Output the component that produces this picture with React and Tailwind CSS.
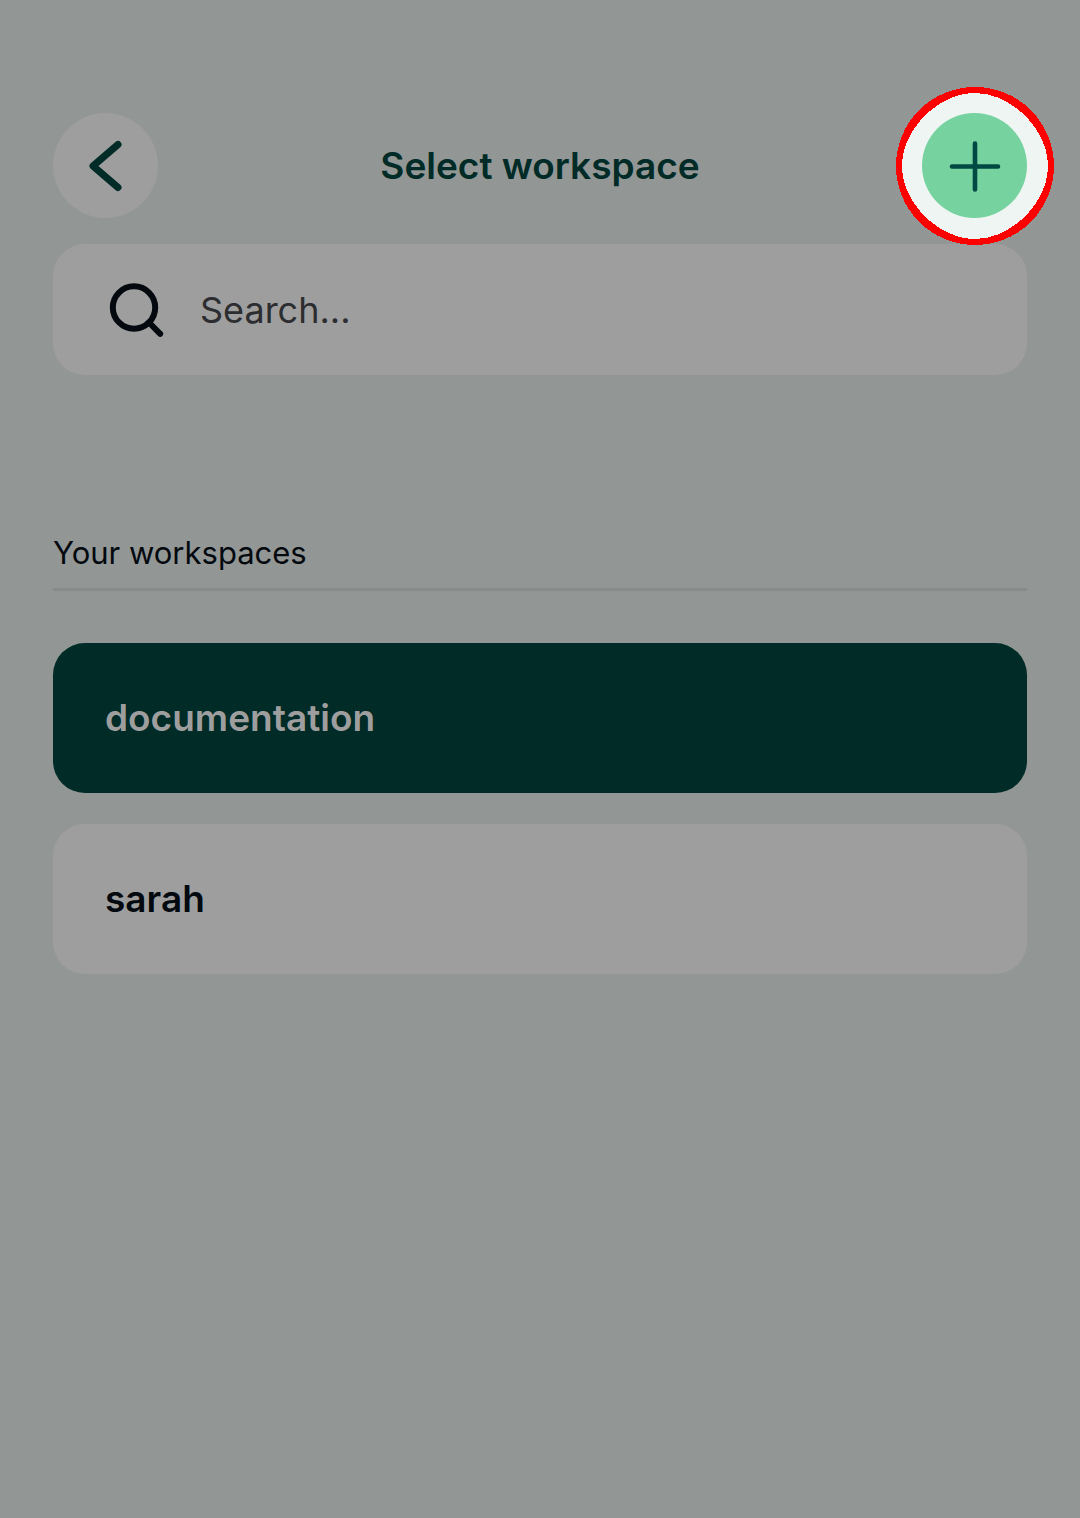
/*
============================================================================
FILE: src/App.jsx
============================================================================
PURPOSE:
  Workspace picker screen. Lists the user's workspaces, with a search box and
  a highlighted button for adding a new one.
============================================================================
*/

import React, { useState } from 'react';

const WORKSPACES = ['documentation', 'sarah'];

const BackIcon = () => (
  <svg viewBox="0 0 105 105" className="size-full" fill="none" aria-hidden="true">
    <path
      d="M65 31.5 L40 53 L65 74.5"
      stroke="currentColor"
      strokeWidth="7"
      strokeLinecap="round"
      strokeLinejoin="round"
    />
  </svg>
);

const PlusIcon = () => (
  <svg viewBox="0 0 105 105" className="size-full" fill="none" aria-hidden="true">
    <path
      d="M53 30.5 V76.5 M30 53.5 H76"
      stroke="currentColor"
      strokeWidth="4.6"
      strokeLinecap="round"
    />
  </svg>
);

const SearchIcon = () => (
  <svg viewBox="0 0 56 56" className="size-14 shrink-0" fill="none" aria-hidden="true">
    <circle cx="26" cy="25.5" r="21.2" stroke="currentColor" strokeWidth="6" />
    <path d="M41 40.5 L52.2 51.8" stroke="currentColor" strokeWidth="6" strokeLinecap="round" />
  </svg>
);

// Hard-edged marker ring, a little thicker on the diagonals
const HighlightRing = () => (
  <svg
    viewBox="0 0 158 158"
    className="absolute -top-[26px] -left-[26px] size-[158px] max-w-none"
    shapeRendering="crispEdges"
    aria-hidden="true"
  >
    <circle cx="79" cy="79" r="79" fill="#ff0000" />
    <path
      d="M79 6 C115.5 6 152 42.5 152 79 C152 115.5 115.5 152 79 152 C42.5 152 6 115.5 6 79 C6 42.5 42.5 6 79 6 Z"
      fill="#eff5f3"
    />
  </svg>
);

const App = () => {
  const [query, setQuery] = useState('');
  const [selected, setSelected] = useState('documentation');

  const visible = WORKSPACES.filter((name) => name.includes(query.toLowerCase()));

  return (
    <div className="min-h-screen bg-[#929694] px-[53px] pt-[113px] pb-16 font-['Inter',sans-serif] text-[#03090e]">
      {/* Header */}
      <header className="flex items-center justify-between">
        <button
          type="button"
          aria-label="Back"
          className="size-[105px] rounded-full bg-[#9e9e9e] text-[#002b27]"
        >
          <BackIcon />
        </button>
        <h1 className="text-[37px] leading-[48px] font-semibold text-[#002b27]">
          Select workspace
        </h1>
        <div className="relative z-10 size-[105px]">
          <HighlightRing />
          <button
            type="button"
            aria-label="Add workspace"
            className="relative size-full rounded-full bg-[#76d29f] text-[#004a43]"
          >
            <PlusIcon />
          </button>
        </div>
      </header>

      {/* Search */}
      <label className="mt-[26px] flex h-[131px] items-center gap-9 rounded-[32px] bg-[#9e9e9e] px-[55px]">
        <SearchIcon />
        <input
          type="text"
          aria-label="Search workspaces"
          placeholder="Search..."
          value={query}
          onChange={(e) => setQuery(e.target.value)}
          className="min-w-0 flex-1 bg-transparent text-[36px] leading-[48px] outline-none placeholder:text-[#2c2d30]"
        />
      </label>

      {/* Workspace list */}
      <h2 className="mt-[158px] border-b-3 border-[#898b8a] pb-[15px] text-[31px] leading-10">
        Your workspaces
      </h2>
      <ul className="mt-[52px] flex flex-col gap-[31px]">
        {visible.map((name) => (
          <li key={name}>
            <button
              type="button"
              onClick={() => setSelected(name)}
              className={`h-[150px] w-full rounded-[32px] px-[52px] text-left text-[37px] leading-[48px] font-semibold ${
                name === selected ? 'bg-[#002b27] text-[#9e9e9e]' : 'bg-[#9e9e9e]'
              }`}
            >
              {name}
            </button>
          </li>
        ))}
      </ul>
    </div>
  );
};

export default App;
